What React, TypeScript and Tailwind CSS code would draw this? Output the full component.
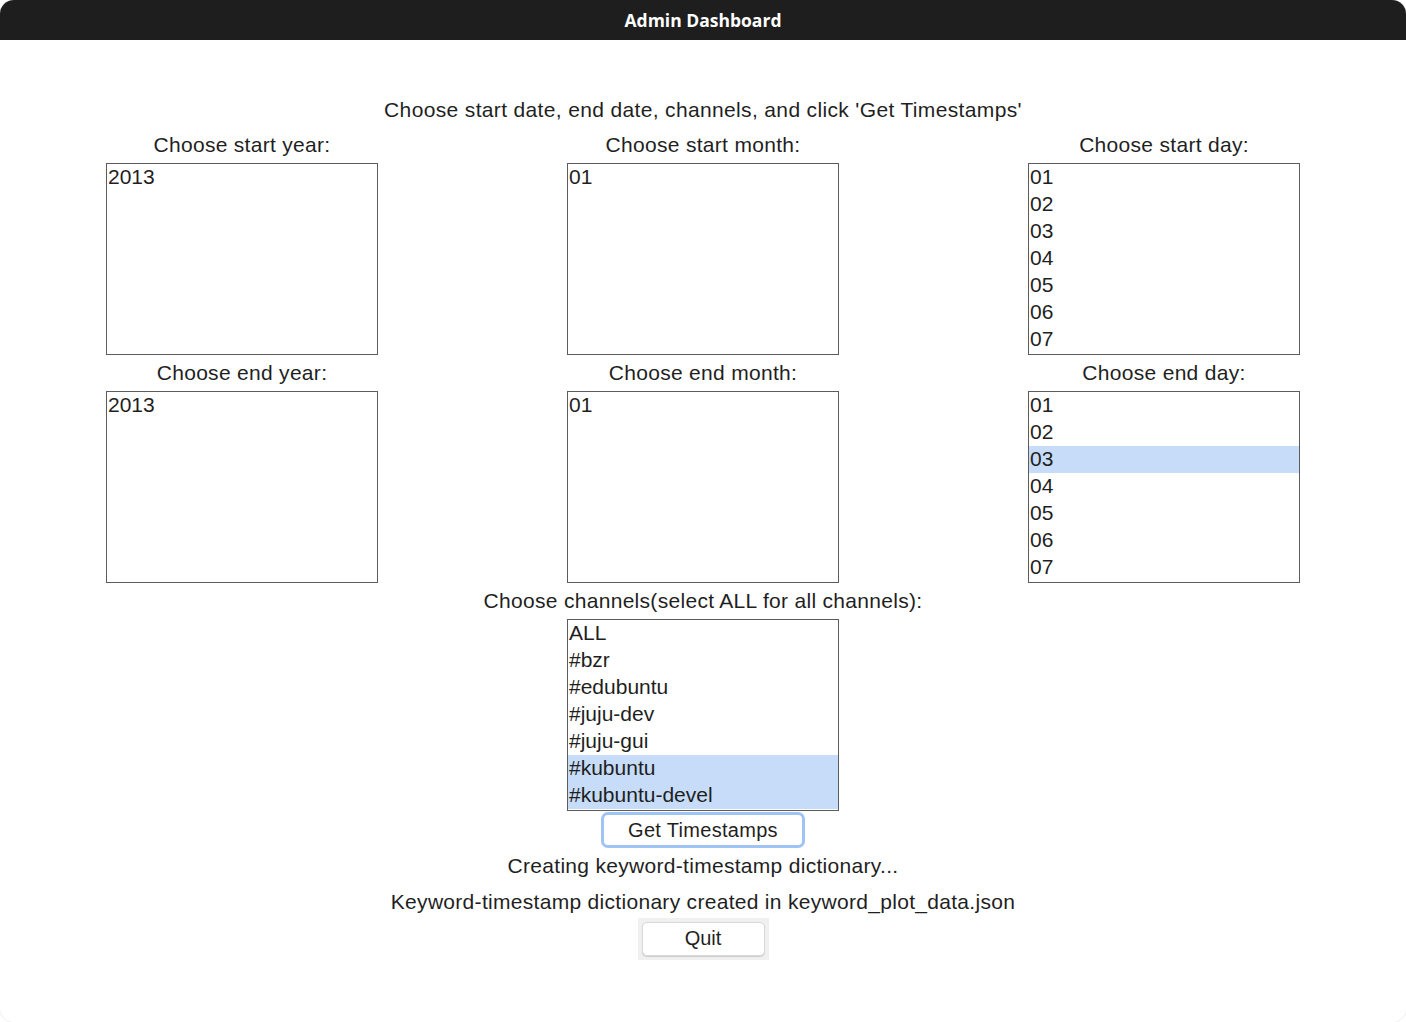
const years = ["2013"];
const months = ["01"];
const days = ["01", "02", "03", "04", "05", "06", "07"];
const channels = [
  "ALL",
  "#bzr",
  "#edubuntu",
  "#juju-dev",
  "#juju-gui",
  "#kubuntu",
  "#kubuntu-devel",
];

function ListBox({
  label,
  items,
  selected = [],
}: {
  label: string;
  items: string[];
  selected?: string[];
}) {
  return (
    <div className="flex w-[272px] flex-col items-center">
      <div className="h-[36px] text-center leading-[36px] tracking-[0.3px]">
        {label}
      </div>
      <div className="h-[192px] w-full overflow-hidden border border-[#5c5c5c] bg-white">
        {items.map((item) => (
          <div
            key={item}
            className={
              "h-[27px] pl-[1px] leading-[25px] " +
              (selected.includes(item) ? "bg-[#c6dcf8]" : "")
            }
          >
            {item}
          </div>
        ))}
      </div>
    </div>
  );
}

export default function App() {
  return (
    <div className="h-[1022px] w-full bg-white">
      <div className="flex h-full flex-col overflow-hidden rounded-[14px] bg-white shadow-[0_0_0_1px_#f2f2f2]">
        <div
          className="flex h-[40px] shrink-0 items-center justify-center bg-[#1e1e1e] text-[17.5px] font-bold text-white"
          style={{ fontFamily: "'Open Sans', 'Noto Sans', sans-serif" }}
        >
          Admin Dashboard
        </div>
        <div
          className="flex flex-col items-center pt-[52px] text-[21px] text-[#1f1f1f]"
          style={{ fontFamily: "'Liberation Sans', Arial, sans-serif" }}
        >
          <div className="h-[36px] leading-[36px] tracking-[0.35px]">
            Choose start date, end date, channels, and click 'Get Timestamps'
          </div>
          <div className="grid grid-cols-[272px_272px_272px] gap-x-[189px] -mt-[1px]">
            <ListBox label="Choose start year:" items={years} />
            <ListBox label="Choose start month:" items={months} />
            <ListBox label="Choose start day:" items={days} />
            <ListBox label="Choose end year:" items={years} />
            <ListBox label="Choose end month:" items={months} />
            <ListBox label="Choose end day:" items={days} selected={["03"]} />
          </div>
          <div className="flex flex-col items-center">
            <div className="h-[36px] leading-[36px] tracking-[0.3px]">
              Choose channels(select ALL for all channels):
            </div>
            <div className="h-[192px] w-[272px] overflow-hidden border border-[#5c5c5c] bg-white">
              {channels.map((c) => (
                <div
                  key={c}
                  className={
                    "h-[27px] pl-[1px] leading-[25px] " +
                    (c === "#kubuntu" || c === "#kubuntu-devel"
                      ? "bg-[#c6dcf8]"
                      : "")
                  }
                >
                  {c}
                </div>
              ))}
            </div>
          </div>
          <button className="mt-[1px] flex h-[36px] w-[204px] items-center justify-center rounded-[7px] border-[3px] border-[#9fc3f3] bg-white text-[20px] tracking-[0.3px] leading-none">
            Get Timestamps
          </button>
          <div className="mt-[1px] h-[36px] leading-[34px] tracking-[0.3px]">
            Creating keyword-timestamp dictionary...
          </div>
          <div className="h-[33px] leading-[33px] tracking-[0.3px]">
            Keyword-timestamp dictionary created in keyword_plot_data.json
          </div>
          <div className="bg-[#f0f0f0] p-[4px]">
            <div className="flex h-[34px] w-[123px] items-center justify-center rounded-[5px] border border-[#d8d8d8] bg-white pb-[2px] text-[20px] shadow-[0_1px_1px_rgba(0,0,0,0.15)]">
              Quit
            </div>
          </div>
        </div>
      </div>
    </div>
  );
}
